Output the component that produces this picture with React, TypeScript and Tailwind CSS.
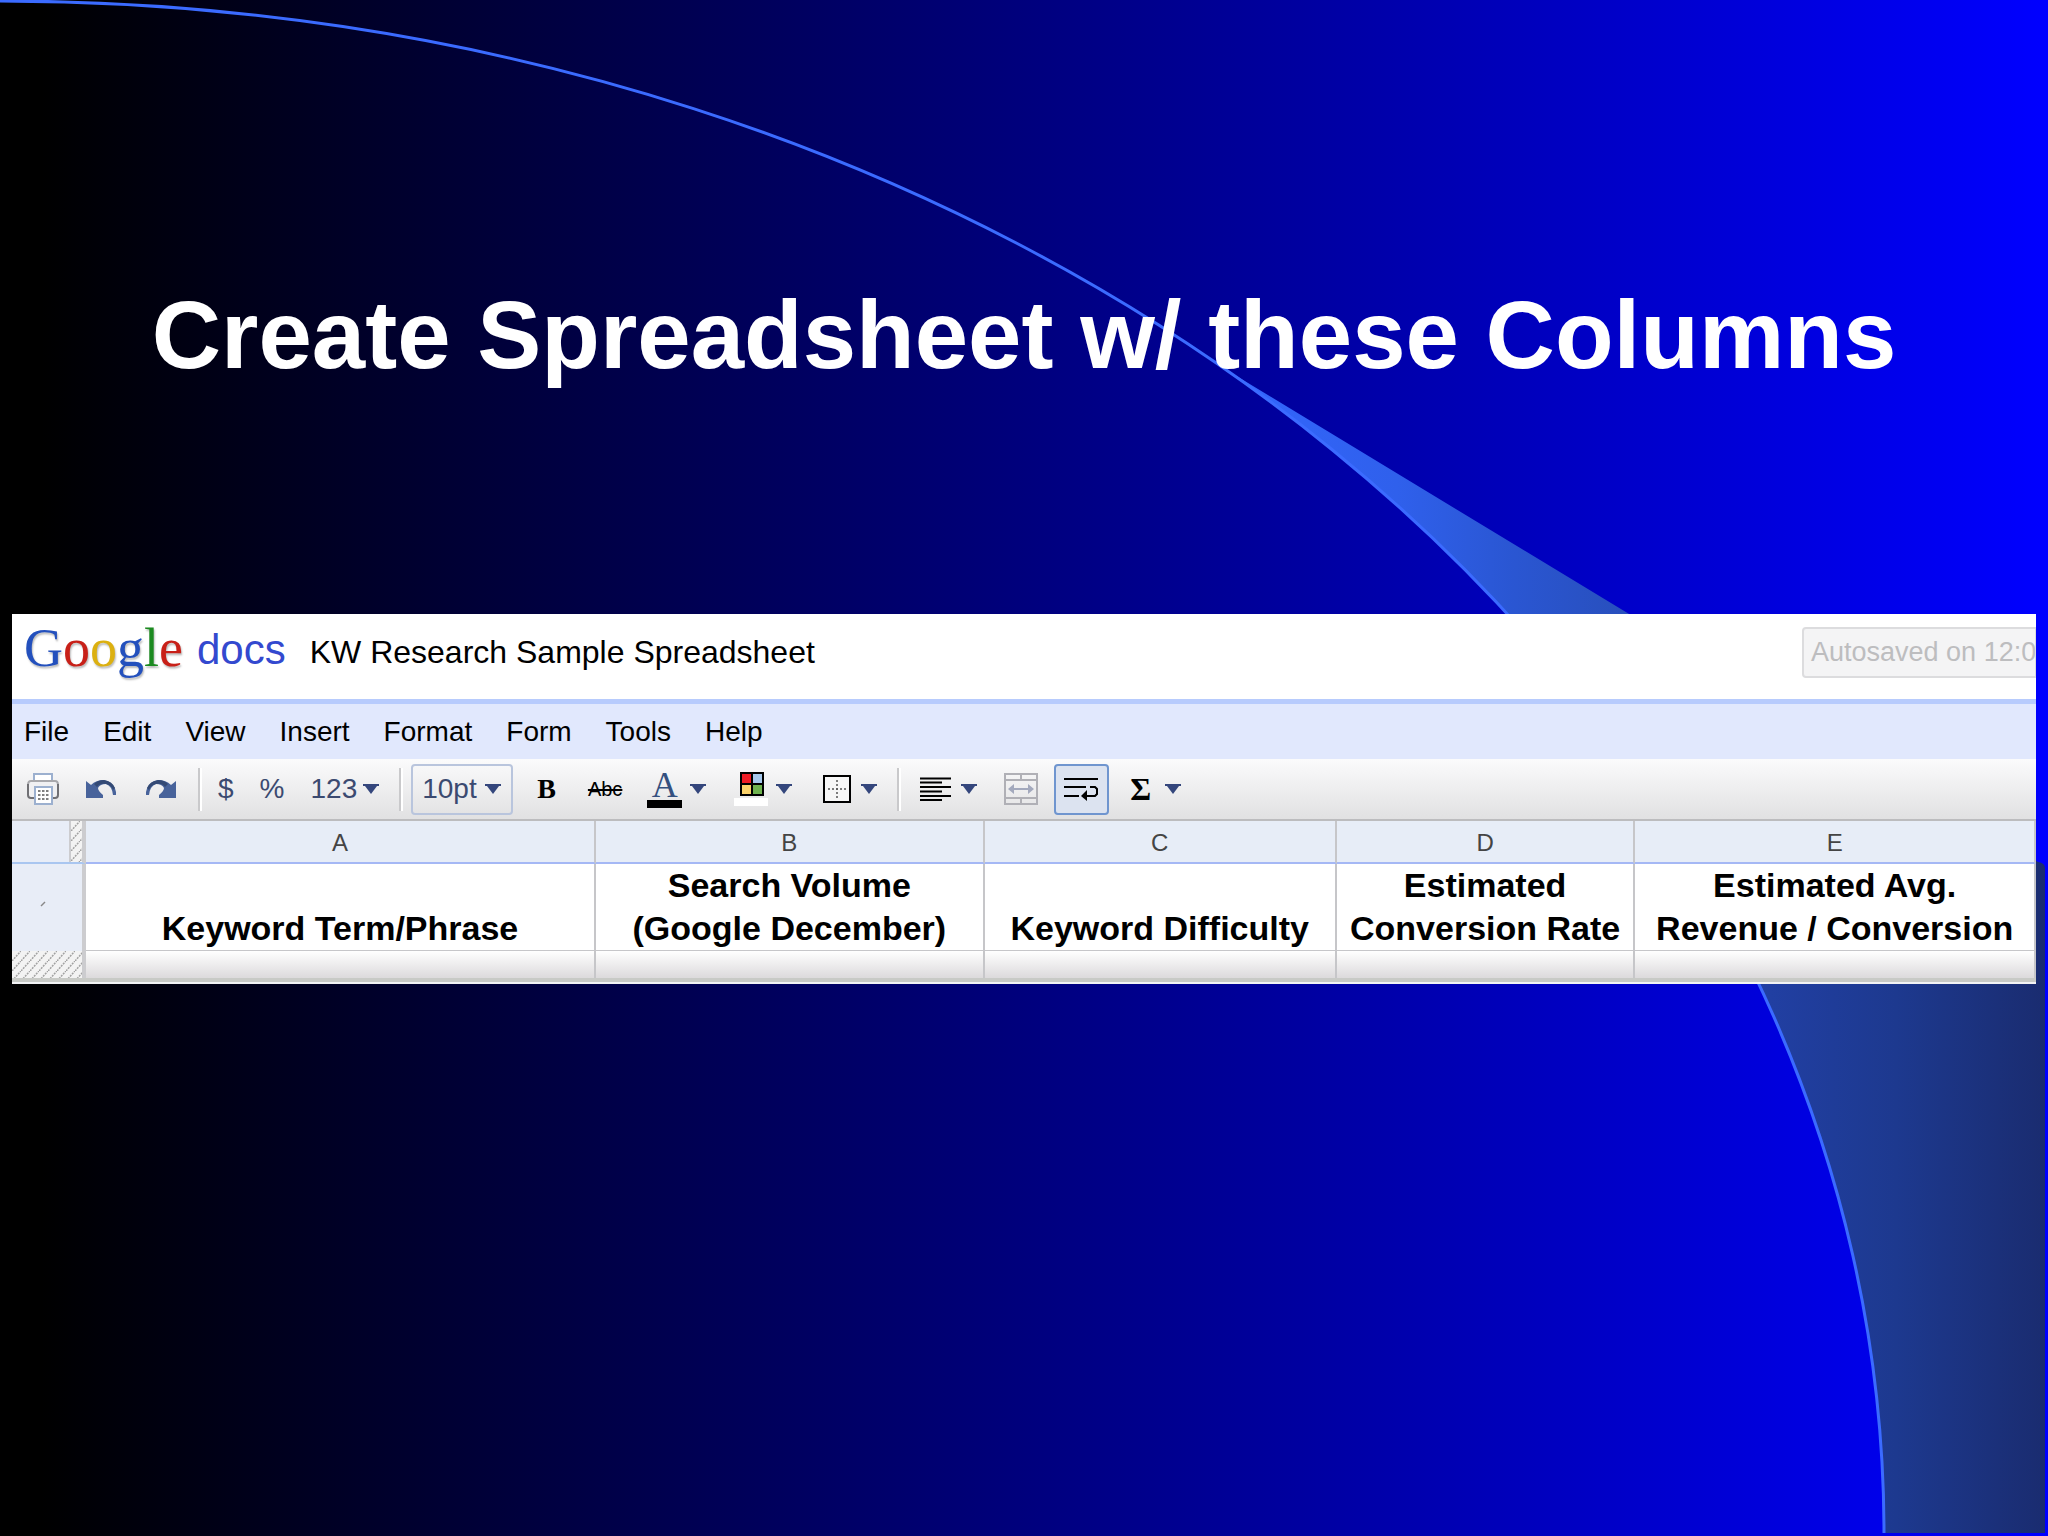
import React from "react";
import clsx from "clsx";

interface Column {
  letter: string;
  lines: string[];
  width: string;
}

const menus = ["File", "Edit", "View", "Insert", "Format", "Form", "Tools", "Help"];

const columns: Column[] = [
  { letter: "A", lines: ["Keyword Term/Phrase"], width: "w-[25.2%]" },
  { letter: "B", lines: ["Search Volume", "(Google December)"], width: "w-[19.2%]" },
  { letter: "C", lines: ["Keyword Difficulty"], width: "w-[17.4%]" },
  { letter: "D", lines: ["Estimated", "Conversion Rate"], width: "w-[14.75%]" },
  { letter: "E", lines: ["Estimated Avg.", "Revenue / Conversion"], width: "" },
];

const Backdrop = () => (
  <svg
    className="absolute inset-0 h-full w-full"
    viewBox="0 0 2048 1536"
    preserveAspectRatio="none"
    aria-hidden="true"
  >
    <defs>
      <linearGradient id="sweep" gradientUnits="userSpaceOnUse" x1="1215" y1="0" x2="2045" y2="0">
        <stop offset="0" stopColor="#3366ff" />
        <stop offset="0.22" stopColor="#2f60ec" />
        <stop offset="0.36" stopColor="#2a56d2" />
        <stop offset="0.5" stopColor="#284fbc" />
        <stop offset="0.67" stopColor="#213fa2" />
        <stop offset="0.82" stopColor="#1d398f" />
        <stop offset="1" stopColor="#1a2c70" />
      </linearGradient>
    </defs>
    <path d="M1215 363 L2038 862 Q2045 863 2045 868 V1533 H1884 A1884 1532 0 0 0 1215 363Z" fill="url(#sweep)" />
    <path d="M0 1 A1884 1532 0 0 1 1884 1533" fill="none" stroke="#3b6bff" strokeWidth="3" />
  </svg>
);

const Caret = () => (
  <svg className="h-[10px] w-4 shrink-0" viewBox="0 0 16 10" aria-hidden="true">
    <path d="M0 0H16V2H14L8 10L2 2H0Z" fill="#34467c" />
  </svg>
);

const Divider = ({ className }: { className?: string }) => (
  <span className={clsx("h-[43px] w-1 shrink-0 border-l-2 border-[#c9c9cb] bg-white", className)} />
);

interface ToolProps {
  label: string;
  className?: string;
  menu?: boolean;
  children: React.ReactNode;
}

const Tool = ({ label, className, menu, children }: ToolProps) => (
  <button
    type="button"
    aria-label={label}
    aria-haspopup={menu ? "menu" : undefined}
    className={clsx("flex shrink-0 items-center leading-8", className)}
  >
    {children}
    {menu && <Caret />}
  </button>
);

const PrintIcon = () => (
  <svg className="h-8 w-8" viewBox="0 0 32 32" fill="none" aria-hidden="true">
    <path d="M3 8H29L31 11V22L28 25H4L1 22V11Z" fill="#f0f0f2" />
    <path d="M7 9V1H25V9" fill="#fff" stroke="#9cb0cf" strokeWidth="2" />
    <path d="M1 12Q1 8 4 8H28Q31 8 31 12" stroke="#a8a8ac" strokeWidth="2" />
    <path d="M1 11V22Q1 25 4 25H8M31 11V22Q31 25 28 25H24" stroke="#707074" strokeWidth="2" />
    <path d="M8 14H25V31H8Z" fill="#fff" stroke="#9cb0cf" strokeWidth="2" />
    <path d="M11 18H22M11 22H22M11 26H22" stroke="#555" strokeWidth="1.5" strokeDasharray="2.5 1.5" />
  </svg>
);

const UndoIcon = ({ flip }: { flip?: boolean }) => (
  <svg className={clsx("h-[19px] w-[30px]", flip && "-scale-x-100")} viewBox="0 0 30 19" aria-hidden="true">
    <path d="M0 1L5 5Q10 0 18 0Q28 2 30 12V15H27Q26 6 20 4Q14 4 12 8Q12 11 17 15V18H0Z" fill="#48639b" />
    <path d="M8 4Q12 0 18 0Q26 1 29 8L27 10Q25 5 20 4Q14 3 11 7Z" fill="#344a75" />
  </svg>
);

const PaletteIcon = () => (
  <svg className="h-[38px] w-[34px]" viewBox="0 0 34 38" aria-hidden="true">
    <path d="M0 28H34V36H0Z" fill="#fff" />
    <path d="M6 2H30V26H6Z" fill="#000" />
    <path d="M8 4H17V13H8Z" fill="#ee1c25" />
    <path d="M19 4H28V13H19Z" fill="#a6c8ec" />
    <path d="M8 15H17V24H8Z" fill="#fbd26a" />
    <path d="M19 15H28V24H19Z" fill="#6fb34f" />
  </svg>
);

const BordersIcon = () => (
  <svg className="h-7 w-7" viewBox="0 0 28 28" fill="none" aria-hidden="true">
    <path d="M1 1H27V27H1Z" fill="#f7f7f7" stroke="#000" strokeWidth="2" />
    <path d="M5 14H24M14 5V24" stroke="#555" strokeWidth="1.5" strokeDasharray="2 2" />
  </svg>
);

const AlignIcon = () => (
  <svg className="h-6 w-[31px]" viewBox="0 0 31 24" aria-hidden="true">
    <path
      d="M0 1.5H31M0 5.5H22M0 10H31M0 14.5H22M0 19H31M0 23H22"
      stroke="#000"
      strokeWidth="2"
    />
  </svg>
);

const MergeIcon = () => (
  <svg className="h-8 w-[34px]" viewBox="0 0 34 32" fill="none" stroke="#b0b0b6" strokeWidth="2" aria-hidden="true">
    <path d="M1 1H33V31H1ZM1 7H33M1 25H33M17 1V7M17 25V31" />
    <path d="M6 16H28" stroke="#a3a9bd" />
    <path d="M4 16L10 11V21ZM30 16L24 11V21Z" fill="#a3a9bd" stroke="none" />
  </svg>
);

const WrapIcon = () => (
  <svg className="h-6 w-[35px]" viewBox="0 0 35 24" fill="none" stroke="#000" strokeWidth="2" aria-hidden="true">
    <path d="M0 2H34M0 10H22M0 19H15" />
    <path d="M26 10H31L33 12V17L31 19H22" />
    <path d="M17 19L23 13V24Z" fill="#000" stroke="none" />
  </svg>
);

const Hatch = ({ id, className }: { id: string; className?: string }) => (
  <svg className={clsx("block", className)} aria-hidden="true">
    <defs>
      <pattern id={id} width="9" height="10" patternUnits="userSpaceOnUse">
        <path d="M0 10L9 0" stroke="#a2a2a2" strokeWidth="1.5" strokeDasharray="2 1" />
      </pattern>
    </defs>
    <rect width="100%" height="100%" fill="#f3f3f3" />
    <rect width="100%" height="100%" fill={`url(#${id})`} />
  </svg>
);

const Header = () => (
  <div className="flex h-[85px] items-start overflow-hidden whitespace-nowrap">
    <div className="flex items-start pl-3">
      <span className="pt-[2px] font-['Liberation_Serif',serif] text-[54px] leading-[64px] [text-shadow:1px_2px_2px_#bbb]">
        <span className="text-[#2350bd]">G</span>
        <span className="text-[#c82018]">o</span>
        <span className="text-[#dcb010]">o</span>
        <span className="text-[#2350bd]">g</span>
        <span className="text-[#1c8a20]">l</span>
        <span className="text-[#c82018]">e</span>
      </span>
      <span className="ml-[14px] pt-1 text-[42px] leading-[64px] text-[#3349cf]">docs</span>
      <span className="ml-6 pt-2 text-[32px] leading-[60px] text-black">KW Research Sample Spreadsheet</span>
    </div>
    <button
      type="button"
      disabled
      className="ml-auto mt-[13px] h-[51px] w-[234px] overflow-hidden rounded-l-sm border-2 border-r border-[#dcdcde] bg-[#f4f4f5] pl-[7px] text-left text-[27px] text-[#bdbdbf]"
    >
      Autosaved on 12:0
    </button>
  </div>
);

const MenuBar = () => (
  <nav className="flex h-[60px] items-center gap-[34px] border-t-[5px] border-[#b7cbfd] bg-[#e1e8fd] pl-3 text-[28px] text-black">
    {menus.map((menu) => (
      <button key={menu} type="button" className="leading-8">
        {menu}
      </button>
    ))}
  </nav>
);

const Toolbar = () => (
  <div
    role="toolbar"
    aria-label="Formatting"
    className="flex h-[62px] items-center border-b-2 border-[#bcbcbe] bg-linear-to-b from-[#fbfbfc] to-[#e1e1e2] pl-[15px] text-[28px] text-[#3b4a70]"
  >
    <Tool label="Print">
      <PrintIcon />
    </Tool>
    <Tool label="Undo" className="ml-[27px]">
      <UndoIcon />
    </Tool>
    <Tool label="Redo" className="ml-[30px]">
      <UndoIcon flip />
    </Tool>
    <Divider className="ml-[22px]" />
    <Tool label="Format as currency" className="ml-4">
      $
    </Tool>
    <Tool label="Format as percent" className="ml-[26px]">
      %
    </Tool>
    <Tool label="More formats" menu className="ml-[26px] gap-[6px]">
      123
    </Tool>
    <Divider className="ml-5" />
    <label className="relative ml-2 flex shrink-0 items-center">
      <select
        aria-label="Font size"
        className="h-[51px] w-[102px] appearance-none rounded-sm border-2 border-[#b9c5dd] bg-transparent pl-[9px]"
      >
        <option>10pt</option>
      </select>
      <span className="pointer-events-none absolute right-3">
        <Caret />
      </span>
    </label>
    <Tool label="Bold" className="ml-6 font-['Liberation_Serif',serif] font-bold text-black">
      B
    </Tool>
    <Tool label="Strikethrough" className="ml-8 text-[20px] text-black line-through decoration-2">
      Abc
    </Tool>
    <Tool label="Text color" menu className="ml-[25px] gap-2">
      <span className="flex w-[35px] flex-col items-center border-b-8 border-black font-['Liberation_Serif',serif] text-[36px] leading-[30px] text-[#34507f]">
        A
      </span>
    </Tool>
    <Tool label="Background color" menu className="ml-7 gap-2">
      <PaletteIcon />
    </Tool>
    <Tool label="Borders" menu className="ml-[31px] gap-[10px]">
      <BordersIcon />
    </Tool>
    <Divider className="ml-5" />
    <Tool label="Align" menu className="ml-[19px] gap-[10px]">
      <AlignIcon />
    </Tool>
    <Tool label="Merge across" className="ml-[27px]">
      <MergeIcon />
    </Tool>
    <Tool
      label="Wrap text"
      className="ml-4 h-[51px] w-[55px] justify-center rounded-sm border-2 border-[#6f95cf] bg-[#dce3f0]"
    >
      <WrapIcon />
    </Tool>
    <Tool label="Functions" menu className="ml-[21px] gap-[14px] text-black">
      <span className="font-['Liberation_Serif',serif] text-[32px] font-bold">Σ</span>
    </Tool>
  </div>
);

const Sheet = () => (
  <table className="w-full table-fixed border-separate border-spacing-0 text-black">
    <colgroup>
      <col className="w-[74px]" />
      {columns.map((col) => (
        <col key={col.letter} className={col.width} />
      ))}
    </colgroup>
    <thead>
      <tr className="h-[43px]">
        <td className="border-b-2 border-r-4 border-[#cccccf] border-b-[#a9c6f0] bg-[#e8edf7] p-0">
          <Hatch id="freeze-columns" className="ml-auto h-[41px] w-[13px] border-l-2 border-[#cccccf]" />
        </td>
        {columns.map((col) => (
          <th
            key={col.letter}
            scope="col"
            className="border-b-2 border-r-2 border-[#c6c6c9] border-b-[#a5b8f5] bg-[#e7edf7] p-0 pt-[2px] text-[24px] font-normal leading-7 text-[#444]"
          >
            {col.letter}
          </th>
        ))}
      </tr>
    </thead>
    <tbody>
      <tr className="h-[87px]">
        <td className="border-r-4 border-[#cccccf] bg-[#e8edf7] p-0">
          <svg className="ml-7 mb-2 block h-[6px] w-[6px]" viewBox="0 0 6 6" aria-hidden="true">
            <path d="M1 5L5 1" stroke="#888" strokeWidth="1.5" />
          </svg>
        </td>
        {columns.map((col) => (
          <td
            key={col.letter}
            className="whitespace-nowrap border-b border-r-2 border-[#c6c6c9] p-0 text-center align-bottom text-[34px] font-bold leading-[43px]"
          >
            {col.lines.map((line) => (
              <div key={line}>{line}</div>
            ))}
          </td>
        ))}
      </tr>
      <tr className="h-[27px]">
        <td className="border-r-4 border-[#cccccf] p-0">
          <Hatch id="freeze-rows" className="h-[27px] w-full" />
        </td>
        {columns.map((col) => (
          <td
            key={col.letter}
            className="border-r-2 border-[#c6c6c9] bg-linear-to-b from-white to-[#dcdadc] p-0"
          />
        ))}
      </tr>
    </tbody>
  </table>
);

export default function App() {
  return (
    <main className="relative min-h-screen overflow-hidden bg-linear-to-r/srgb from-black from-2% to-[#0000ff] to-100% font-['Liberation_Sans',Arial,sans-serif]">
      <Backdrop />
      <div className="relative px-3 pt-[287px]">
        <h1 className="text-center text-8xl font-bold leading-none text-white">
          Create Spreadsheet w/ these Columns
        </h1>
        <section className="mt-[231px] overflow-hidden bg-white">
          <Header />
          <MenuBar />
          <Toolbar />
          <Sheet />
          <div className="h-[6px] border-t-4 border-[#c8cac6] bg-[#f2f3f5]" />
        </section>
      </div>
    </main>
  );
}
